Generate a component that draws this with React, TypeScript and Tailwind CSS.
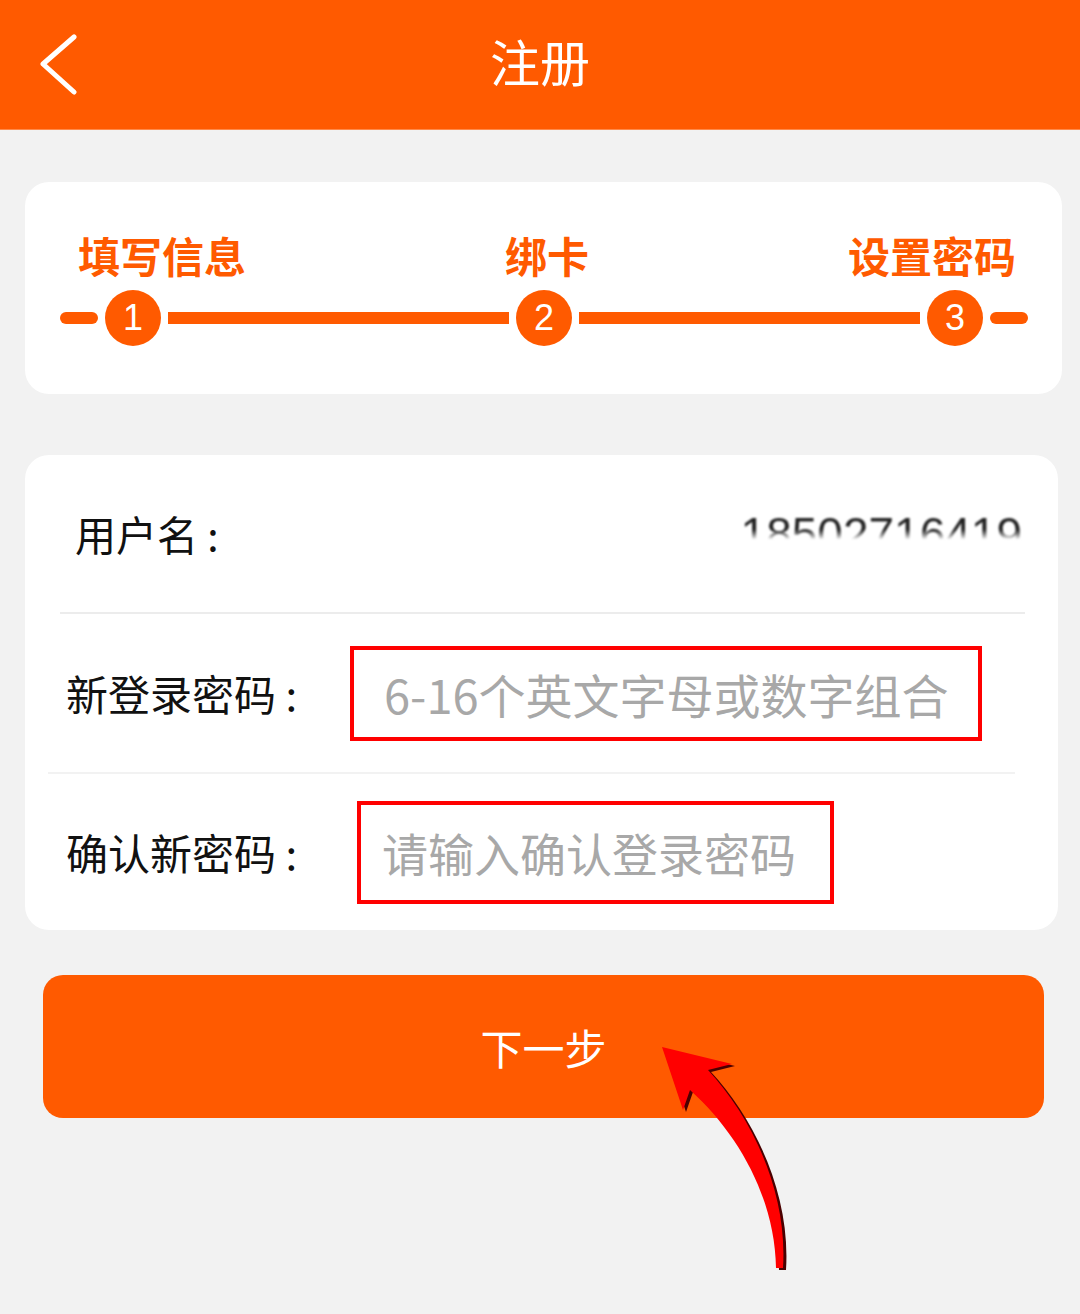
const ORANGE = "bg-[#ff5a00]";

function Stepper() {
  return (
    <div className="mx-[25px] mt-[52px] h-[212px] w-[1037px] rounded-[24px] bg-white">
      <div className="grid grid-cols-3 pl-[53px] pr-[46px] pt-[52px] text-[42px] font-bold leading-none text-[#ff5a00]">
        <span className="justify-self-start">填写信息</span>
        <span className="justify-self-center">绑卡</span>
        <span className="justify-self-end">设置密码</span>
      </div>
      <div className="mt-[14px] flex items-center gap-[7px] pl-[35px] pr-[34px]">
        <div className={`h-[12px] w-[38px] rounded-full ${ORANGE}`} />
        <Dot n={1} />
        <div className={`h-[12px] flex-1 ${ORANGE}`} />
        <Dot n={2} />
        <div className={`h-[12px] flex-1 ${ORANGE}`} />
        <Dot n={3} />
        <div className={`h-[12px] w-[38px] rounded-full ${ORANGE}`} />
      </div>
    </div>
  );
}

function Dot({ n }: { n: number }) {
  return (
    <div
      className={`flex h-[56px] w-[56px] shrink-0 items-center justify-center rounded-full ${ORANGE} font-['Liberation_Sans',sans-serif] text-[36px] leading-none text-white`}
    >
      {n}
    </div>
  );
}

function BackIcon() {
  return (
    <svg width="44" height="62" viewBox="0 0 44 62" fill="none">
      <path d="M36 3 L5 30 L36 58" stroke="white" strokeWidth="5" strokeLinecap="round" strokeLinejoin="round" />
    </svg>
  );
}

function Arrow() {
  const d =
    "M22 17 L92 34 L68 40 C110 85 148 160 143 238 L136 238 C135 170 100 105 50 60 L43 80 Z";
  return (
    <svg className="absolute left-[640px] top-[1030px]" width="170" height="250" viewBox="0 0 170 250">
      <path d={d} fill="#4a0000" transform="translate(3 2)" />
      <path d={d} fill="#ff0000" />
    </svg>
  );
}

export default function App() {
  return (
    <div className="relative min-h-[1314px] w-[1080px] overflow-hidden bg-[#f2f2f2] font-['Noto_Sans_CJK_SC','Noto_Sans',sans-serif]">
      <header className={`grid h-[130px] grid-cols-[1fr_auto_1fr] items-center ${ORANGE} border-b border-[#ff8a4a] pb-[10px]`}>
        <div className="pl-[38px] pt-[10px]">
          <BackIcon />
        </div>
        <h1 className="text-[50px] leading-none text-white">注册</h1>
        <div />
      </header>

      <Stepper />

      <div className="mx-[25px] mt-[61px] w-[1033px] rounded-[24px] bg-white">
        <div className="flex h-[157px] items-center justify-between pl-[50px] pr-[36px]">
          <span className="text-[41px] leading-none text-[#111]">用户名 :</span>
          <span className="bg-linear-to-b from-[#222] from-40% to-white to-62% bg-clip-text font-['Liberation_Sans',sans-serif] text-[46px] leading-none text-transparent blur-[1px]">
            18502716419
          </span>
        </div>
        <div className="ml-[35px] mr-[33px] h-[2px] bg-[#ececec]" />

        <div className="flex h-[158px] items-center pl-[41px]">
          <span className="w-[284px] text-[42px] leading-none text-[#111]">新登录密码 :</span>
          <div className="flex h-[95px] w-[632px] items-center border-4 border-[#ff0000] pl-[30px]">
            <input
              className="w-full bg-transparent text-[47px] leading-none text-[#333] outline-none placeholder:text-[#a8a8a8]"
              placeholder="6-16个英文字母或数字组合"
            />
          </div>
        </div>
        <div className="ml-[23px] mr-[43px] h-[2px] bg-[#f2f2f2]" />

        <div className="flex h-[156px] items-center pl-[41px]">
          <span className="w-[291px] text-[42px] leading-none text-[#111]">确认新密码 :</span>
          <div className="flex h-[103px] w-[477px] items-center border-4 border-[#ff0000] pl-[21px]">
            <input
              className="w-full bg-transparent text-[46px] leading-none text-[#333] outline-none placeholder:text-[#a8a8a8]"
              placeholder="请输入确认登录密码"
            />
          </div>
        </div>
      </div>

      <button
        className={`mx-[43px] mt-[45px] flex h-[143px] w-[1001px] items-center justify-center rounded-[20px] ${ORANGE} text-[42px] leading-none text-white`}
      >
        下一步
      </button>

      <Arrow />
    </div>
  );
}
